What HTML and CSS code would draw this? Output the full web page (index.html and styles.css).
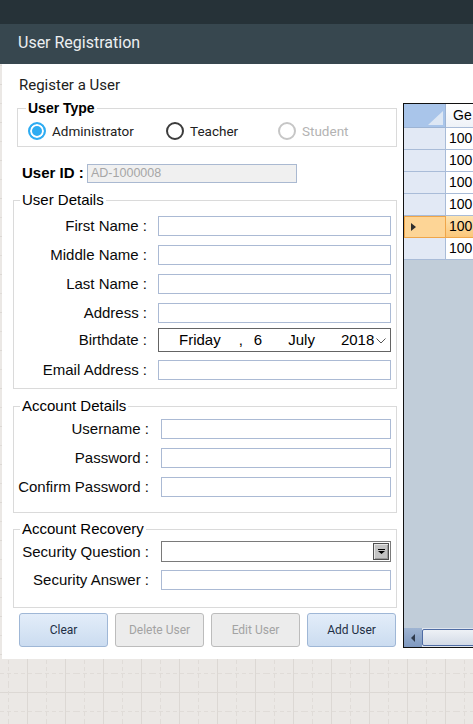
FILE: index.html
```html
<!DOCTYPE html>
<html>
<head>
<meta charset="utf-8">
<title>User Registration</title>
<link rel="stylesheet" href="styles.css">
</head>
<body>
<div class="topbar"></div>
<div class="header">User Registration</div>
<div class="panel">
  <div class="form">
    <div class="title">Register a User</div>

    <fieldset class="group usertype">
      <legend>User Type</legend>
      <div class="radios">
        <div class="radio r1"><span class="ring on"></span><span>Administrator</span></div>
        <div class="radio r2"><span class="ring"></span><span>Teacher</span></div>
        <div class="radio r3 disabled"><span class="ring"></span><span>Student</span></div>
      </div>
    </fieldset>

    <div class="idrow">
      <span class="idlabel">User ID :</span>
      <div class="idbox">AD-1000008</div>
    </div>

    <fieldset class="group details">
      <legend>User Details</legend>
      <div class="gbody">
        <div class="row"><span class="lbl">First Name :</span><div class="input"></div></div>
        <div class="row"><span class="lbl">Middle Name :</span><div class="input"></div></div>
        <div class="row"><span class="lbl">Last Name :</span><div class="input"></div></div>
        <div class="row"><span class="lbl">Address :</span><div class="input"></div></div>
        <div class="row birth"><span class="lbl">Birthdate :</span>
          <div class="datebox">
            <span class="d-day">Friday</span>
            <span class="d-comma">,</span>
            <span class="d-num">6</span>
            <span class="d-month">July</span>
            <span class="d-year">2018</span>
            <svg class="d-chev" width="10" height="6" viewBox="0 0 10 6"><path d="M0.5 0.5 L5 5 L9.5 0.5" fill="none" stroke="#555" stroke-width="1"/></svg>
          </div>
        </div>
        <div class="row email"><span class="lbl">Email Address :</span><div class="input"></div></div>
      </div>
    </fieldset>

    <fieldset class="group account">
      <legend>Account Details</legend>
      <div class="gbody">
        <div class="row"><span class="lbl">Username :</span><div class="input"></div></div>
        <div class="row"><span class="lbl">Password :</span><div class="input"></div></div>
        <div class="row"><span class="lbl">Confirm Password :</span><div class="input"></div></div>
      </div>
    </fieldset>

    <fieldset class="group recovery">
      <legend>Account Recovery</legend>
      <div class="gbody">
        <div class="row"><span class="lbl">Security Question :</span>
          <div class="combo"><span class="combo-btn"><svg width="7" height="5" viewBox="0 0 7 5"><path d="M0 0H7V1H0Z M0 2H7L3.5 5Z" fill="#000"/></svg></span></div>
        </div>
        <div class="row ans"><span class="lbl">Security Answer :</span><div class="input"></div></div>
      </div>
    </fieldset>

    <div class="buttons">
      <div class="btn primary">Clear</div>
      <div class="btn disabled">Delete User</div>
      <div class="btn disabled">Edit User</div>
      <div class="btn primary">Add User</div>
    </div>
  </div>

  <div class="grid">
    <div class="table">
      <div class="corner"><span class="corner-tri"></span></div>
      <div class="colhead">Ge</div>
      <div class="rowhead"></div><div class="cell">100</div>
      <div class="rowhead"></div><div class="cell">100</div>
      <div class="rowhead"></div><div class="cell">100</div>
      <div class="rowhead"></div><div class="cell">100</div>
      <div class="rowhead sel"><span class="arrow"></span></div><div class="cell sel">100</div>
      <div class="rowhead"></div><div class="cell">100</div>
    </div>
    <div class="hscroll">
      <div class="sb-btn"><span class="sb-arrow"></span></div>
      <div class="sb-thumb"></div>
    </div>
  </div>
</div>
</body>
</html>
```

FILE: styles.css
```css
* { box-sizing: border-box; }
html, body { margin: 0; padding: 0; }
body {
  width: 473px;
  height: 724px;
  overflow: hidden;
  font-family: "Liberation Sans", Arial, sans-serif;
  color: #000;
  background-color: #ebe8e5;
  background-image: url("data:image/svg+xml,%3Csvg xmlns='http://www.w3.org/2000/svg' width='38' height='38'%3E%3Cpath d='M27.5 0V38M0 8.5H38' stroke='%23dcd8d4' stroke-width='1' fill='none'/%3E%3Cpath d='M8.5 0V38M0 27.5H38' stroke='%23e0dcd8' stroke-width='1' stroke-dasharray='4 3' fill='none'/%3E%3C/svg%3E");
}

.topbar { height: 24px; background: #263238; }
.header {
  height: 40px;
  background: #37474f;
  color: #eceff1;
  font: 16px/38px Roboto, sans-serif;
  padding-left: 18px;
}

.panel {
  display: flex;
  gap: 6px;
  margin-left: 2px;
  height: 595px;
  background: #fff;
  padding: 10px 0 0 11px;
  overflow: hidden;
}

.form { flex: none; width: 384px; display: flex; flex-direction: column; }

.title {
  font: 15px/18px Roboto, sans-serif;
  color: #212121;
  margin: 2px 0 0 6px;
}

fieldset.group {
  margin: 0;
  padding: 0;
  min-width: 0;
  border: 1px solid #dadada;
}
fieldset.group legend {
  padding: 0 2px;
  margin-left: 6px;
  font: 15px/18px "Liberation Sans", Arial, sans-serif;
  color: #000;
}

/* User type */
.usertype { margin: 6px 0 0 4px !important; }
.usertype legend {
  font: bold 14px/16px "Liberation Sans", Arial, sans-serif !important;
  margin-left: 8px !important;
}
.radios { display: flex; padding: 7px 0 7px 10px; }
.radio {
  display: flex;
  align-items: center;
  gap: 6px;
  height: 16px;
  font: 13.5px/16px Roboto, sans-serif;
  color: #212121;
}
.r1 { width: 138px; }
.r2 { width: 112px; }
.radio.disabled { color: #b3b3b3; }
.ring {
  flex: none;
  width: 18px;
  height: 18px;
  border-radius: 50%;
  border: 2px solid #3c3c3c;
  background: #fff;
}
.ring.on {
  border-color: #2eacf2;
  background: #2eacf2;
  box-shadow: inset 0 0 0 2px #fff;
}
.radio.disabled .ring { border-color: #c6c6c6; }

/* User ID */
.idrow {
  display: flex;
  align-items: center;
  height: 20px;
  margin: 16px 0 0 9px;
}
.idlabel {
  width: 65px;
  font: bold 15px/18px "Liberation Sans", Arial, sans-serif;
  white-space: nowrap;
}
.idbox {
  width: 210px;
  height: 19px;
  background: #f0f0f0;
  border: 1px solid #aab9d1;
  font: 12.5px/17px "Liberation Sans", Arial, sans-serif;
  color: #a6a6a6;
  padding-left: 3px;
}

/* Group bodies */
.details { margin-top: 8px !important; }
.account { margin-top: 8px !important; }
.recovery { margin-top: 7px !important; }

.gbody { display: flex; flex-direction: column; gap: 9px; padding-right: 5px; }
.details .gbody { padding-top: 7px; padding-bottom: 8px; }
.account .gbody { padding-top: 4px; padding-bottom: 15px; }
.recovery .gbody { padding-top: 3px; padding-bottom: 17px; }

.row { display: flex; align-items: center; }
.lbl {
  flex: none;
  width: 133px;
  margin-right: 11px;
  text-align: right;
  white-space: nowrap;
  font: 15px/18px "Liberation Sans", Arial, sans-serif;
  color: #0a0a0a;
}
.account .lbl, .recovery .lbl { width: 135px; margin-right: 12px; }

.input {
  flex: 1;
  height: 20px;
  border: 1px solid #abbad4;
  background: #fff;
}

.row.birth { margin-top: -4px; margin-bottom: -1px; }
.datebox {
  flex: 1;
  height: 24px;
  border: 1px solid #646464;
  display: flex;
  align-items: center;
  padding-left: 20px;
  font: 15px/18px "Liberation Sans", Arial, sans-serif;
  color: #000;
  white-space: nowrap;
}
.d-comma { margin-left: 18px; }
.d-num { margin-left: 11px; }
.d-month { margin-left: 26px; }
.d-year { margin-left: 26px; }
.d-chev { margin-left: 2px; margin-top: 1px; }

.combo {
  flex: 1;
  height: 21px;
  border: 1px solid #7a7a7a;
  background: #fff;
  display: flex;
  justify-content: flex-end;
  align-items: center;
  padding-right: 1px;
}
.combo-btn {
  width: 16px;
  height: 17px;
  border: 1px solid #4e4e4e;
  background: #c3c3c3;
  box-shadow: inset 1px 1px 0 #e6e6e6, inset -1px -1px 0 #9a9a9a;
  display: flex;
  align-items: center;
  justify-content: center;
}
.row.ans { margin-top: -1px; }

/* Buttons */
.buttons { display: flex; gap: 7px; margin: 5px 0 0 6px; }
.btn {
  width: 89px;
  height: 34px;
  border-radius: 3px;
  display: flex;
  align-items: center;
  justify-content: center;
  font: 12px/16px Roboto, sans-serif;
}
.btn.primary {
  background: linear-gradient(#e3edf9, #cbdcf0);
  border: 1px solid #9fb7d6;
  color: #1e2f45;
}
.btn.disabled {
  background: #ececec;
  border: 1px solid #bcbcbc;
  color: #a3a3a3;
}

/* Data grid */
.grid {
  flex: none;
  width: 200px;
  height: 545px;
  margin-top: 29px;
  border: 1px solid #111;
  background: #c1cdd9;
  display: flex;
  flex-direction: column;
}
.table {
  display: grid;
  grid-template-columns: 42px 156px;
  grid-auto-rows: 22px;
  grid-template-rows: 24px;
}
.corner {
  background: #a9c5ea;
  border-right: 1px solid #9db4d4;
  border-bottom: 1px solid #9db4d4;
  display: flex;
  justify-content: flex-end;
  align-items: flex-end;
  padding: 0 2px 2px 0;
}
.corner-tri {
  width: 0; height: 0;
  border-left: 15px solid transparent;
  border-bottom: 14px solid #dde7f4;
}
.colhead {
  background: linear-gradient(#ffffff, #eef2f8);
  border-right: 1px solid #a9bcd8;
  border-bottom: 1px solid #a9bcd8;
  font: 14px/23px "Liberation Sans", Arial, sans-serif;
  padding-left: 7px;
  color: #000;
}
.rowhead {
  background: #e2e9f5;
  border-right: 1px solid #a9bcd8;
  border-bottom: 1px solid #a9bcd8;
  display: flex;
  align-items: center;
}
.cell {
  background: #fff;
  border-bottom: 1px solid #a9bcd8;
  font: 14px/21px "Liberation Sans", Arial, sans-serif;
  padding-left: 3px;
  color: #000;
}
.rowhead.sel {
  background: #fdd596;
  border: 1px solid #efa64a;
}
.cell.sel {
  background: linear-gradient(#fde3b0, #fbc77a);
  border-bottom-color: #efa64a;
}
.arrow {
  width: 0; height: 0;
  margin-left: 6px;
  border-left: 5px solid #2e2e2e;
  border-top: 4px solid transparent;
  border-bottom: 4px solid transparent;
}

.hscroll {
  margin-top: auto;
  height: 19px;
  display: flex;
  background: #dfe5ee;
}
.sb-btn {
  width: 18px;
  background: linear-gradient(#9fb4d2, #7f99c0);
  display: flex;
  align-items: center;
  justify-content: center;
}
.sb-arrow {
  width: 0; height: 0;
  border-right: 4px solid #2f3a4c;
  border-top: 4px solid transparent;
  border-bottom: 4px solid transparent;
}
.sb-thumb {
  flex: 1;
  margin: 1px 0 1px 0;
  border: 1px solid #4f6ca4;
  border-radius: 2px;
  background: linear-gradient(#eef1f6, #d3dbe7);
}
```
